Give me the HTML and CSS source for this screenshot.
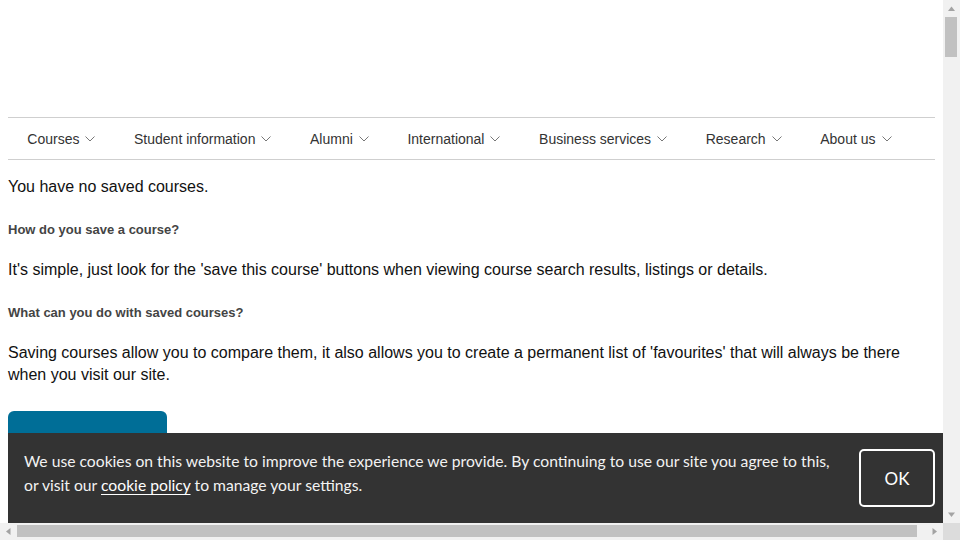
FILE: index.html
```html
<!DOCTYPE html>
<html lang="en">
<head>
<meta charset="utf-8">
<title>Saved courses</title>
<link rel="stylesheet" href="styles.css">
</head>
<body>
<div class="window">
  <div class="viewport">
    <div class="page">
      <header class="site-header"></header>
      <nav class="main-nav">
        <ul class="nav-list">
          <li class="nav-item">Courses<svg class="chev" viewBox="0 0 10 6"><path d="M0.5 0.5 L5 5 L9.5 0.5"/></svg></li>
          <li class="nav-item">Student information<svg class="chev" viewBox="0 0 10 6"><path d="M0.5 0.5 L5 5 L9.5 0.5"/></svg></li>
          <li class="nav-item">Alumni<svg class="chev" viewBox="0 0 10 6"><path d="M0.5 0.5 L5 5 L9.5 0.5"/></svg></li>
          <li class="nav-item">International<svg class="chev" viewBox="0 0 10 6"><path d="M0.5 0.5 L5 5 L9.5 0.5"/></svg></li>
          <li class="nav-item">Business services<svg class="chev" viewBox="0 0 10 6"><path d="M0.5 0.5 L5 5 L9.5 0.5"/></svg></li>
          <li class="nav-item">Research<svg class="chev" viewBox="0 0 10 6"><path d="M0.5 0.5 L5 5 L9.5 0.5"/></svg></li>
          <li class="nav-item">About us<svg class="chev" viewBox="0 0 10 6"><path d="M0.5 0.5 L5 5 L9.5 0.5"/></svg></li>
        </ul>
      </nav>
      <main class="content">
        <p class="lead">You have no saved courses.</p>
        <h3 class="sub">How do you save a course?</h3>
        <p class="text">It's simple, just look for the 'save this course' buttons when viewing course search results, listings or details.</p>
        <h3 class="sub">What can you do with saved courses?</h3>
        <p class="text">Saving courses allow you to compare them, it also allows you to create a permanent list of 'favourites' that will always be there when you visit our site.</p>
        <a class="btn" href="#" aria-label="Search courses"></a>
      </main>
    </div>
    <div class="cookie-bar">
      <p class="cookie-text">We use cookies on this website to improve the experience we provide. By continuing to use our site you agree to this, or visit our <a class="cookie-link" href="#">cookie policy</a> to manage your settings.</p>
      <button class="cookie-ok">OK</button>
    </div>
  </div>
  <div class="vscroll">
    <svg class="arrow" viewBox="0 0 17 17"><path d="M5 11 L8.5 6.5 L12 11 Z"/></svg>
    <div class="vtrack"><div class="vthumb"></div></div>
    <svg class="arrow" viewBox="0 0 17 17"><path d="M5 6.5 L8.5 11 L12 6.5 Z"/></svg>
  </div>
  <div class="hscroll">
    <svg class="arrow" viewBox="0 0 17 17"><path d="M10.5 5 L6 8.5 L10.5 12 Z"/></svg>
    <div class="htrack"><div class="hthumb"></div></div>
    <svg class="arrow" viewBox="0 0 17 17"><path d="M6.5 5 L11 8.5 L6.5 12 Z"/></svg>
  </div>
  <div class="corner"></div>
</div>
</body>
</html>
```
FILE: styles.css
```css
html, body {
  margin: 0;
  padding: 0;
}
body {
  font-family: "Liberation Sans", Arial, sans-serif;
  color: #111;
  background: #fff;
}
.window {
  width: 960px;
  height: 540px;
  display: grid;
  grid-template-columns: 943px 17px;
  grid-template-rows: 523px 17px;
  overflow: hidden;
}
.viewport {
  position: relative;
  overflow: hidden;
}
.page {
  padding: 0 8px;
}
.site-header {
  height: 117px;
}
.main-nav {
  border-top: 1px solid #cfcfcf;
  border-bottom: 1px solid #cfcfcf;
}
.nav-list {
  list-style: none;
  margin: 0;
  padding: 0;
  display: flex;
  height: 41px;
  align-items: center;
}
.nav-item {
  display: flex;
  align-items: center;
  padding: 0 19.3px;
  font-size: 14px;
  color: #333;
}
.chev {
  width: 10px;
  height: 6px;
  margin-left: 6px;
  margin-top: 1px;
  fill: none;
  stroke: #777;
  stroke-width: 1;
}
.content {
  padding-top: 16px;
}
.lead, .text {
  margin: 0;
  font-size: 16px;
  line-height: 22px;
  color: #111;
}
.sub {
  margin: 24px 0 21px;
  font-size: 13px;
  line-height: 16px;
  font-weight: bold;
  color: #444;
}
.btn {
  display: block;
  margin-top: 25px;
  width: 159px;
  height: 48px;
  background: #006e97;
  border-radius: 6px;
}
.cookie-bar {
  position: absolute;
  bottom: 0;
  left: 8px;
  width: 100%;
  box-sizing: border-box;
  padding: 16px;
  background: #333;
  display: flex;
  align-items: flex-start;
  gap: 24px;
  font-family: Lato, "Liberation Sans", sans-serif;
}
.cookie-text {
  margin: 0;
  flex: 1;
  font-size: 15.7px;
  line-height: 24px;
  color: #f2f2f2;
}
.cookie-link {
  color: #fff;
  text-decoration: underline;
  text-underline-offset: 3px;
}
.cookie-ok {
  flex: none;
  width: 76px;
  height: 58px;
  background: transparent;
  border: 2px solid #fff;
  border-radius: 5px;
  color: #fff;
  font-family: Lato, "Liberation Sans", sans-serif;
  font-size: 17px;
  padding: 0;
}
.vscroll {
  background: #f1f1f1;
  display: flex;
  flex-direction: column;
}
.hscroll {
  background: #f1f1f1;
  display: flex;
}
.arrow {
  width: 17px;
  height: 17px;
  flex: none;
  fill: #a3a3a3;
}
.vtrack {
  flex: 1;
  padding: 0 3px 0 2px;
}
.vthumb {
  height: 40px;
  background: #c1c1c1;
}
.htrack {
  flex: 1;
  padding: 2px 0 3px;
}
.hthumb {
  width: 900px;
  height: 100%;
  background: #c1c1c1;
}
.corner {
  background: #dcdcdc;
}
```
